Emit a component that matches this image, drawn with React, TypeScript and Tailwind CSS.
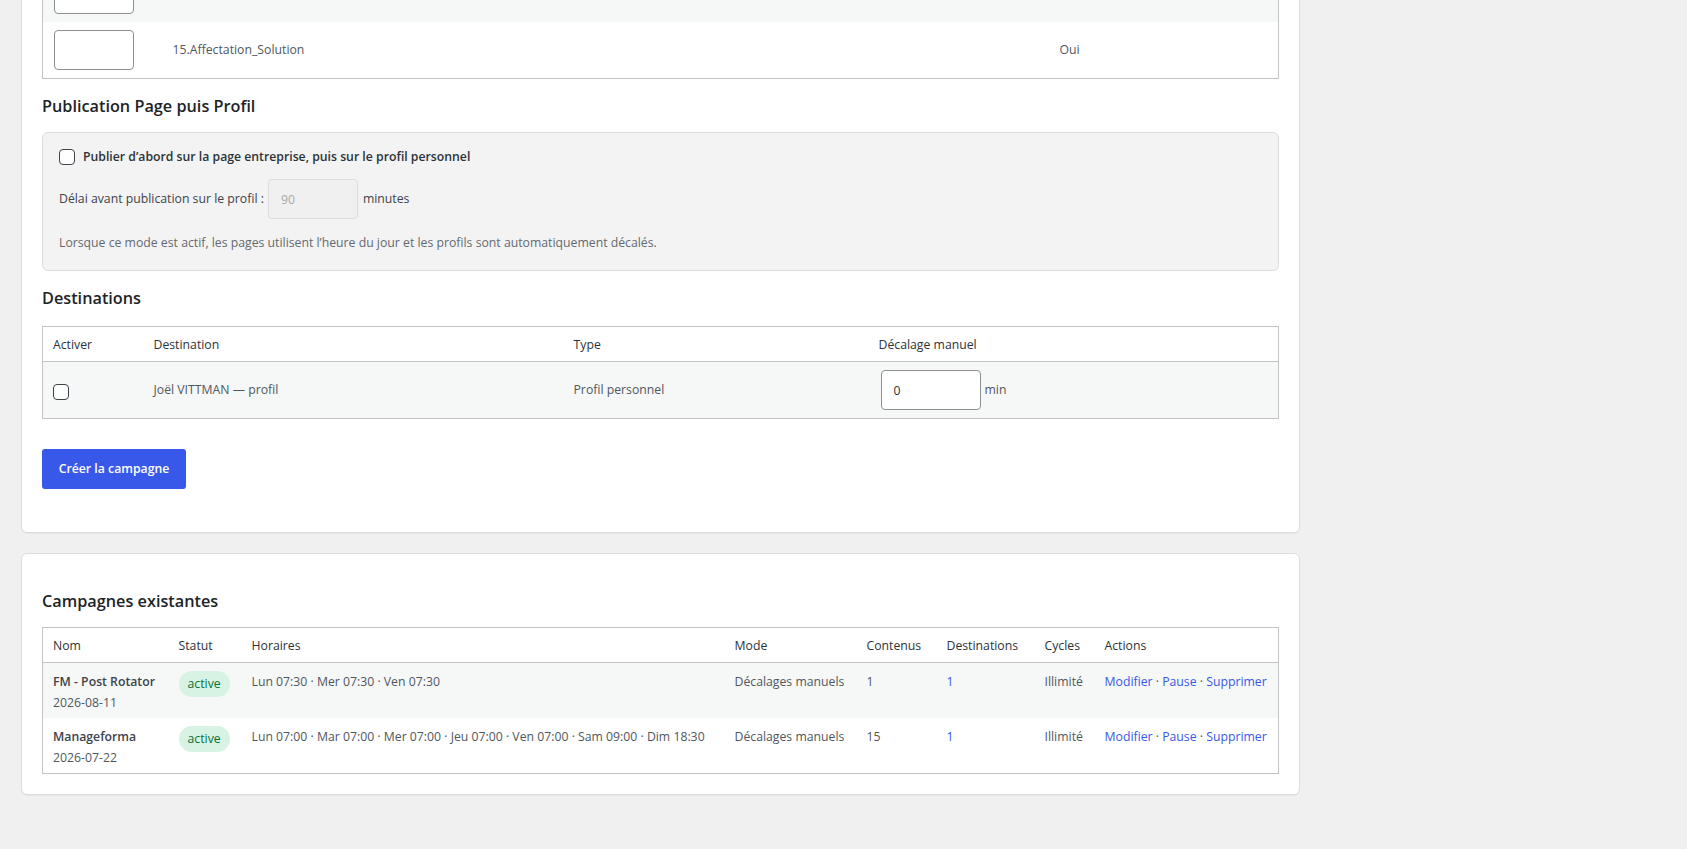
import React from 'react';

const campaigns = [
  {
    name: 'FM - Post Rotator',
    date: '2026-08-11',
    schedule: 'Lun 07:30 · Mer 07:30 · Ven 07:30',
    contents: '1',
  },
  {
    name: 'Manageforma',
    date: '2026-07-22',
    schedule: 'Lun 07:00 · Mar 07:00 · Mer 07:00 · Jeu 07:00 · Ven 07:00 · Sam 09:00 · Dim 18:30',
    contents: '15',
  },
];

const contentRows = ['14.Devis_Relance', '15.Affectation_Solution'];

function Checkbox() {
  return <input className="m-0 block h-4 w-4 appearance-none rounded-[4px] border border-[#3c434a] bg-white" type="checkbox" />;
}

function Heading({ children, className }: { children: React.ReactNode; className: string }) {
  return <h2 className={`text-[16.25px] font-semibold leading-[21px] text-[#1d2327] ${className}`}>{children}</h2>;
}

export default function App() {
  return (
    <div className="min-h-screen overflow-hidden bg-[#f0f0f1] pl-[21px] font-['Open_Sans',sans-serif] text-[12.25px] text-[#50575e]">
      {/* Nouvelle campagne */}
      <div className="-mt-[56px] w-[1279px] rounded-md border border-[#dcdcde] bg-white px-5 pb-[43px] pt-5 shadow-[0_1px_1px_rgba(0,0,0,0.04)]">
        <table className="w-full table-fixed border border-[#c3c4c7]">
          <colgroup>
            <col className="w-[120px]" />
            <col className="w-[887px]" />
            <col />
          </colgroup>
          <tbody>
            {contentRows.map((label, index) => (
              <tr className={index % 2 === 0 ? 'bg-[#f6f7f7]' : 'bg-white'} key={label}>
                <td className="px-[11px] py-2">
                  <input className="block h-10 w-[80px] rounded-[4px] border border-[#8c8f94] bg-white" type="text" />
                </td>
                <td className="px-[10px] py-2 align-middle">{label}</td>
                <td className="px-[10px] py-2 align-middle">Oui</td>
              </tr>
            ))}
          </tbody>
        </table>

        <Heading className="mt-[17px]">Publication Page puis Profil</Heading>
        <div className="mt-[15px] rounded-md border border-[#dcdcde] bg-[#f3f3f3] px-4 pb-[17px] pt-[14px]">
          <label className="flex h-5 items-center gap-2 font-semibold text-[#2c3338]">
            <Checkbox />
            Publier d’abord sur la page entreprise, puis sur le profil personnel
          </label>
          <div className="mt-3 flex h-10 items-center text-[#3c434a]">
            <span>Délai avant publication sur le profil :</span>
            <input
              className="ml-1 h-10 w-[90px] rounded-[4px] border border-[#dcdcde] bg-[#f0f0f0] px-3 text-[12.25px] text-[#a7aaad]"
              defaultValue="90"
              disabled
              type="number"
            />
            <span className="ml-[5px]">minutes</span>
          </div>
          <p className="mt-[14px] leading-5 text-[#646970]">
            Lorsque ce mode est actif, les pages utilisent l’heure du jour et les profils sont automatiquement décalés.
          </p>
        </div>

        <Heading className="mt-[17px]">Destinations</Heading>
        <table className="mt-[17px] w-full table-fixed border border-[#c3c4c7]">
          <colgroup>
            <col className="w-[101px]" />
            <col className="w-[420px]" />
            <col className="w-[305px]" />
            <col />
          </colgroup>
          <thead>
            <tr className="border-b border-[#c3c4c7] text-left text-[#2c3338]">
              <th className="px-[10px] pb-[7px] pt-[9px] font-normal leading-[18px]">Activer</th>
              <th className="px-[10px] pb-[7px] pt-[9px] font-normal leading-[18px]">Destination</th>
              <th className="px-[10px] pb-[7px] pt-[9px] font-normal leading-[18px]">Type</th>
              <th className="px-[10px] pb-[7px] pt-[9px] font-normal leading-[18px]">Décalage manuel</th>
            </tr>
          </thead>
          <tbody>
            <tr className="bg-[#f6f7f7]">
              <td className="px-[10px] py-2 align-middle">
                <div className="mt-[3px]">
                  <Checkbox />
                </div>
              </td>
              <td className="px-[10px] py-2 align-middle">Joël VITTMAN — profil</td>
              <td className="px-[10px] py-2 align-middle">Profil personnel</td>
              <td className="px-[10px] py-2">
                <div className="ml-0.5 flex items-center">
                  <input
                    className="h-10 w-[100px] rounded-[4px] border border-[#8c8f94] bg-white px-3 text-[12.25px] text-[#2c3338]"
                    defaultValue="0"
                    type="number"
                  />
                  <span className="ml-1">min</span>
                </div>
              </td>
            </tr>
          </tbody>
        </table>

        <button className="mt-[30px] h-10 w-[144px] rounded-[3px] bg-[#3858e9] font-semibold text-white" type="button">
          Créer la campagne
        </button>
      </div>

      {/* Campagnes existantes */}
      <div className="mt-5 w-[1279px] rounded-md border border-[#dcdcde] bg-white px-5 pb-5 pt-[37px] shadow-[0_1px_1px_rgba(0,0,0,0.04)]">
        <Heading className="">Campagnes existantes</Heading>
        <table className="mt-[15px] w-full table-fixed border border-[#c3c4c7]">
          <colgroup>
            <col className="w-[126px]" />
            <col className="w-[73px]" />
            <col className="w-[483px]" />
            <col className="w-[132px]" />
            <col className="w-[80px]" />
            <col className="w-[98px]" />
            <col className="w-[60px]" />
            <col />
          </colgroup>
          <thead>
            <tr className="border-b border-[#c3c4c7] text-left text-[#2c3338]">
              {['Nom', 'Statut', 'Horaires', 'Mode', 'Contenus', 'Destinations', 'Cycles', 'Actions'].map((label) => (
                <th className="px-[10px] pb-[7px] pt-[9px] font-normal leading-[18px]" key={label}>
                  {label}
                </th>
              ))}
            </tr>
          </thead>
          <tbody>
            {campaigns.map((campaign, index) => (
              <tr className={index % 2 === 0 ? 'bg-[#f6f7f7]' : 'bg-white'} key={campaign.name}>
                <td className="px-[10px] pb-[5px] pt-2 align-top">
                  <div className="font-semibold leading-[22px] text-[#3c434a]">{campaign.name}</div>
                  <div className="leading-5">{campaign.date}</div>
                </td>
                <td className="px-[10px] pb-[5px] pt-2 align-top">
                  <span className="inline-block h-[26px] rounded-full bg-[#d7f3e3] px-[9px] leading-[26px] text-[#08703b]">active</span>
                </td>
                <td className="whitespace-nowrap px-[10px] pb-[5px] pt-2 align-top leading-[22px]">{campaign.schedule}</td>
                <td className="whitespace-nowrap px-[10px] pb-[5px] pt-2 align-top leading-[22px]">Décalages manuels</td>
                <td className="px-[10px] pb-[5px] pt-2 align-top leading-[22px]">{campaign.contents}</td>
                <td className="px-[10px] pb-[5px] pt-2 align-top leading-[22px] text-[#3858e9]">1</td>
                <td className="px-[10px] pb-[5px] pt-2 align-top leading-[22px]">Illimité</td>
                <td className="whitespace-nowrap px-[10px] pb-[5px] pt-2 align-top leading-[22px]">
                  <a className="text-[#3858e9]" href="#">Modifier</a> · <a className="text-[#3858e9]" href="#">Pause</a> ·{' '}
                  <a className="text-[#3858e9]" href="#">Supprimer</a>
                </td>
              </tr>
            ))}
          </tbody>
        </table>
      </div>
    </div>
  );
}
